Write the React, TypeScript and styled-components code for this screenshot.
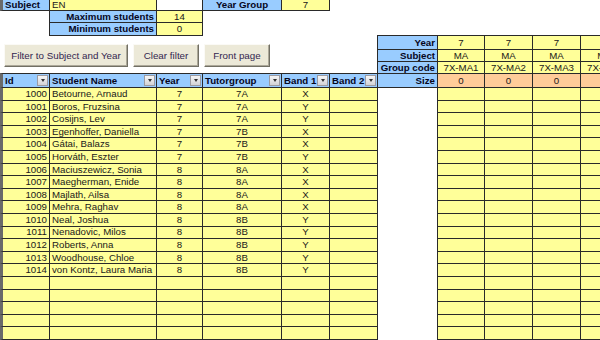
import React from 'react';
import styled, { createGlobalStyle } from 'styled-components';

const Yellow = '#ffff99';
const Blue = '#99ccff';
const Peach = '#ffcc99';
const Line = '#2a2a2a';

type Tone = 'blue' | 'yellow' | 'peach' | 'none';
type Align = 'left' | 'center' | 'right';

const toneColor = { blue: Blue, yellow: Yellow, peach: Peach, none: 'transparent' };
const justify = { left: 'flex-start', center: 'center', right: 'flex-end' };

const GlobalStyle = createGlobalStyle`
  html, body {
    margin: 0;
    padding: 0;
    background: #fff;
    overflow: hidden;
  }
  body {
    font-family: "Liberation Sans", Arial, sans-serif;
  }
`;

const Sheet = styled.div`
  display: grid;
  grid-template-columns: 49px 107px 46px 79px 48px 48px 60px 47px 48px 48px 48px;
  grid-template-rows: 12px 12px 13px 14px 12px 12px 14px;
  grid-auto-rows: 12.6px;
  width: 628px;
  margin-top: -2px;
  font-size: 9.7px;
  color: #201818;
`;

const Cell = styled.div<{ $tone?: Tone; $align?: Align; $bold?: boolean; $edge?: boolean; $span?: number }>`
  grid-column: span ${({ $span }) => $span ?? 1};
  display: flex;
  align-items: center;
  justify-content: ${({ $align }) => justify[$align ?? 'left']};
  padding: 0 2px;
  min-width: 0;
  overflow: hidden;
  white-space: nowrap;
  line-height: 1;
  font-weight: ${({ $bold }) => ($bold ? 'bold' : 'normal')};
  color: ${({ $tone }) => ($tone === 'blue' ? '#06061c' : 'inherit')};
  background: ${({ $tone }) => toneColor[$tone ?? 'none']};
  border: ${({ $tone }) => ($tone && $tone !== 'none' ? `1px solid ${Line}` : '0')};
  border-left: ${({ $edge }) => ($edge ? '3px solid #6a6a6a' : undefined)};
  margin: ${({ $tone }) => ($tone && $tone !== 'none' ? '0 -1px -1px 0' : '0')};
`;

const HeadCell = styled(Cell)`
  justify-content: space-between;
  padding-right: 1px;
`;

const DropButton = styled.span`
  flex: none;
  width: 9px;
  height: 9px;
  display: flex;
  align-items: center;
  justify-content: center;
  background: linear-gradient(#f6f6f6, #d2d2d6);
  border: 1px solid #9b9ba3;

  &::after {
    content: '';
    border-left: 2.5px solid transparent;
    border-right: 2.5px solid transparent;
    border-top: 3px solid #333;
  }
`;

const ButtonBar = styled.div`
  grid-column: 1 / span 6;
  grid-row: span 3;
  display: flex;
  align-items: flex-start;
  gap: 5px;
  padding: 9px 0 0 4px;
`;

const SheetButton = styled.button<{ $w: number }>`
  width: ${({ $w }) => $w}px;
  height: 23px;
  padding: 0;
  background: #ece9d8;
  border: 1px solid;
  border-color: #fbfaf6 #716f64 #716f64 #fbfaf6;
  box-shadow: inset -1px -1px 0 #aca899;
  font-family: "Liberation Sans", Arial, sans-serif;
  font-size: 9.8px;
  color: #33264f;
`;

const students: [number, string, number, string, string][] = [
  [1000, 'Betourne, Arnaud', 7, '7A', 'X'],
  [1001, 'Boros, Fruzsina', 7, '7A', 'Y'],
  [1002, 'Cosijns, Lev', 7, '7A', 'Y'],
  [1003, 'Egenhoffer, Daniella', 7, '7B', 'X'],
  [1004, 'Gátai, Balazs', 7, '7B', 'X'],
  [1005, 'Horváth, Eszter', 7, '7B', 'Y'],
  [1006, 'Maciuszewicz, Sonia', 8, '8A', 'X'],
  [1007, 'Maegherman, Enide', 8, '8A', 'X'],
  [1008, 'Majlath, Ailsa', 8, '8A', 'X'],
  [1009, 'Mehra, Raghav', 8, '8A', 'X'],
  [1010, 'Neal, Joshua', 8, '8B', 'Y'],
  [1011, 'Nenadovic, Milos', 8, '8B', 'Y'],
  [1012, 'Roberts, Anna', 8, '8B', 'Y'],
  [1013, 'Woodhouse, Chloe', 8, '8B', 'Y'],
  [1014, 'von Kontz, Laura Maria', 8, '8B', 'Y'],
];

const headers = ['Id', 'Student Name', 'Year', 'Tutorgroup', 'Band 1', 'Band 2'];
const groups = ['1', '2', '3', '4'];
const TOTAL_ROWS = 21;

function App() {
  const rows = Array.from({ length: TOTAL_ROWS }, (_, i) => students[i]);

  return (
    <>
      <GlobalStyle />
      <Sheet>
        <Cell $tone="blue" $bold $edge>Subject</Cell>
        <Cell $tone="yellow">EN</Cell>
        <Cell />
        <Cell $tone="blue" $bold $align="center">Year Group</Cell>
        <Cell $tone="yellow" $align="center">7</Cell>
        <Cell $span={6} />

        <Cell />
        <Cell $tone="blue" $bold $align="right">Maximum students</Cell>
        <Cell $tone="yellow" $align="center">14</Cell>
        <Cell $span={8} />

        <Cell />
        <Cell $tone="blue" $bold $align="right">Minimum students</Cell>
        <Cell $tone="yellow" $align="center">0</Cell>
        <Cell $span={8} />

        <ButtonBar>
          <SheetButton $w={124}>Filter to Subject and Year</SheetButton>
          <SheetButton $w={66}>Clear filter</SheetButton>
          <SheetButton $w={66}>Front page</SheetButton>
        </ButtonBar>

        <Cell $tone="blue" $bold $align="right">Year</Cell>
        {groups.map(g => <Cell key={'y' + g} $tone="yellow" $align="center">7</Cell>)}
        <Cell $tone="blue" $bold $align="right">Subject</Cell>
        {groups.map(g => <Cell key={'s' + g} $tone="yellow" $align="center">MA</Cell>)}
        <Cell $tone="blue" $bold $align="right">Group code</Cell>
        {groups.map(g => <Cell key={'g' + g} $tone="yellow" $align="center">7X-MA{g}</Cell>)}

        {headers.map((h, i) => (
          <HeadCell key={h} $tone="blue" $bold $edge={i === 0}>
            {h}
            <DropButton />
          </HeadCell>
        ))}
        <Cell $tone="blue" $bold $align="right">Size</Cell>
        {groups.map(g => <Cell key={'z' + g} $tone="peach" $align="center">0</Cell>)}

        {rows.map((s, i) => (
          <React.Fragment key={i}>
            <Cell $tone="yellow" $align="right" $edge>{s?.[0]}</Cell>
            <Cell $tone="yellow">{s?.[1]}</Cell>
            <Cell $tone="yellow" $align="center">{s?.[2]}</Cell>
            <Cell $tone="yellow" $align="center">{s?.[3]}</Cell>
            <Cell $tone="yellow" $align="center">{s?.[4]}</Cell>
            <Cell $tone="yellow" />
            <Cell />
            {groups.map(g => <Cell key={g} $tone="yellow" />)}
          </React.Fragment>
        ))}
      </Sheet>
    </>
  );
}

export default App;
